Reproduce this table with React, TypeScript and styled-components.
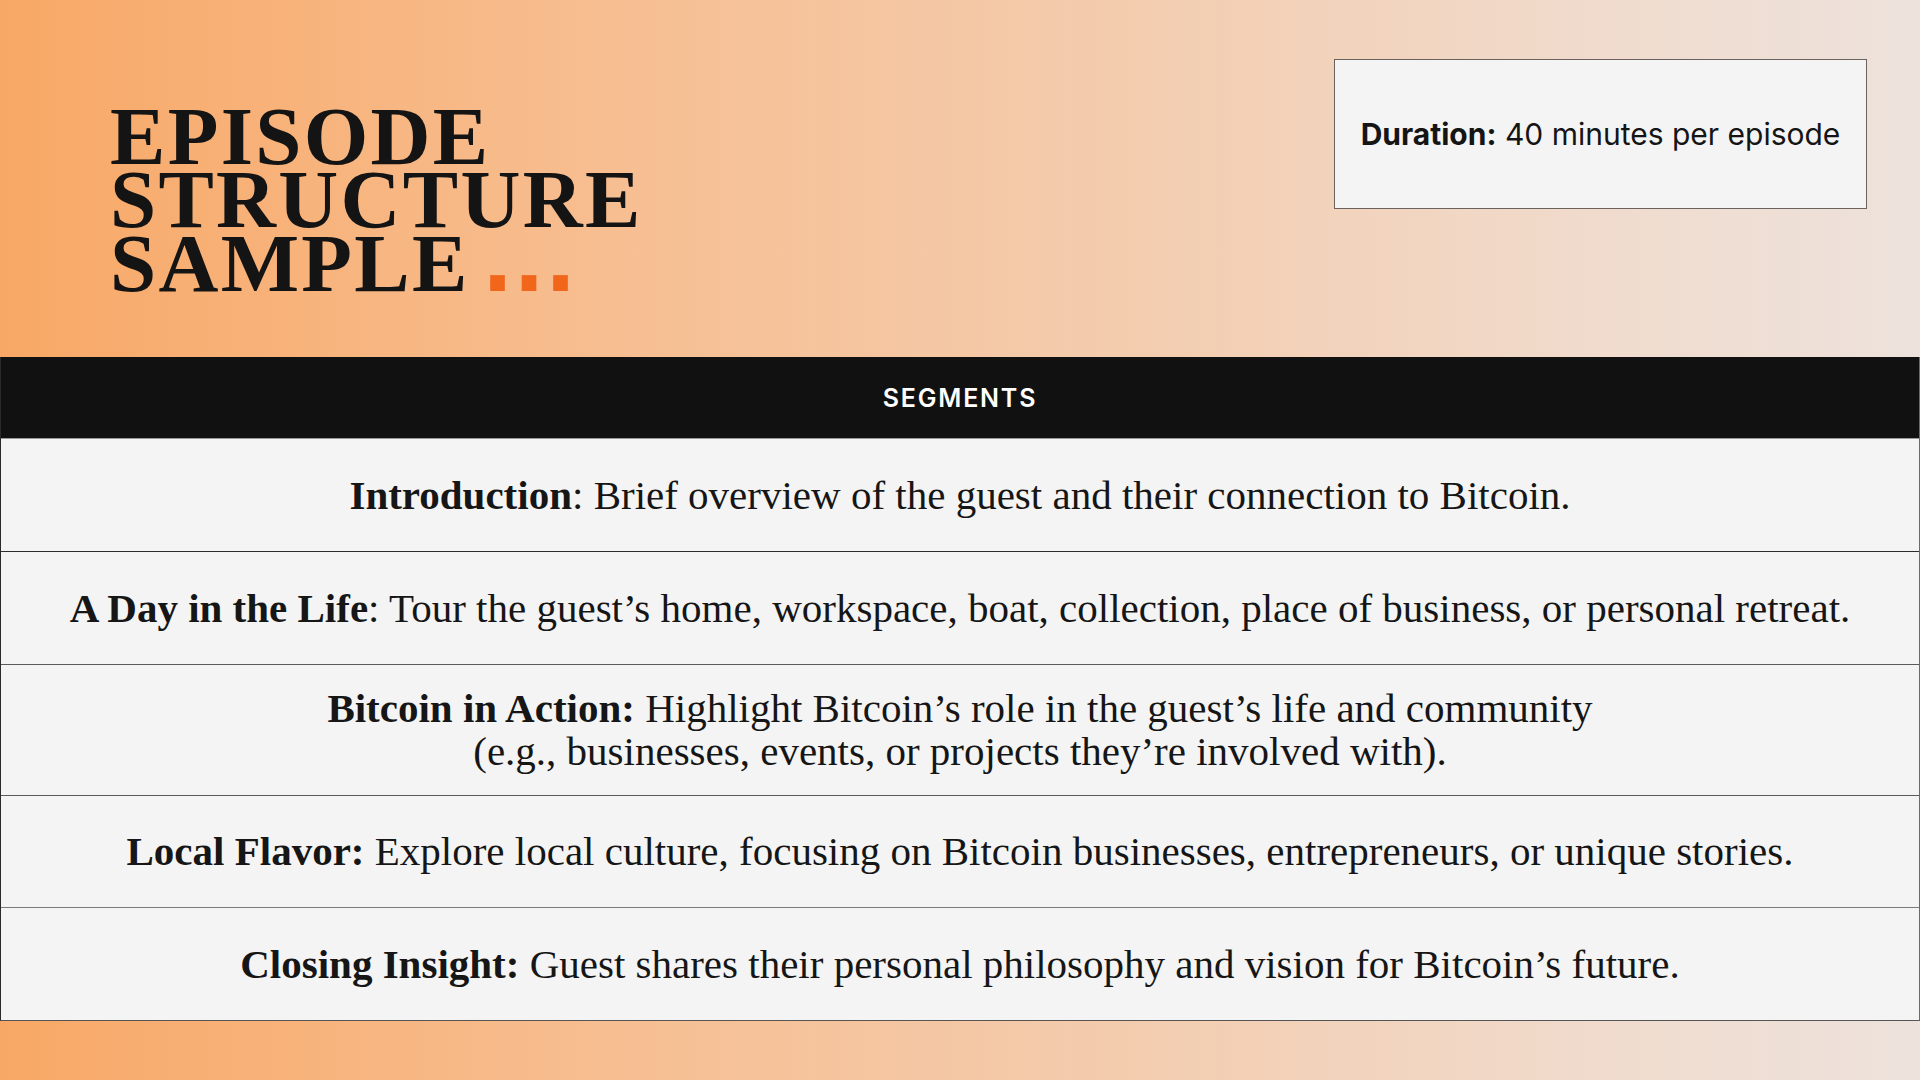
import * as React from 'react';
import styled, { createGlobalStyle } from 'styled-components';

const GlobalStyle = createGlobalStyle`
    html, body {
        margin: 0;
        padding: 0;
    }
    body {
        font-family: "Liberation Serif", serif;
        color: #141414;
    }
`;

const Page = styled.div`
    width: 1920px;
    height: 1080px;
    display: flex;
    flex-direction: column;
    background: linear-gradient(90deg, #f8a866 0%, #f7bd8f 30%, #f3cdb0 60%, #f0dccf 85%, #ede2dc 100%);
    overflow: hidden;
`;

const Header = styled.header`
    height: 357px;
    display: flex;
    justify-content: space-between;
    align-items: flex-start;
    padding: 0 53px 0 110px;
    box-sizing: border-box;
`;

const Title = styled.h1`
    margin: 105px 0 0;
    font-family: "Liberation Serif", serif;
    font-weight: 700;
    font-size: 83px;
    line-height: 63px;
    letter-spacing: 2.3px;
    text-transform: uppercase;
    color: #141414;
`;

// square dots, as in the reference
const Dots = styled.span`
    font-family: "DejaVu Sans", sans-serif;
    font-weight: 700;
    color: #f2661c;
    letter-spacing: 0;
    margin-left: 12px;
`;

const DurationBox = styled.div`
    margin-top: 59px;
    width: 533px;
    height: 150px;
    box-sizing: border-box;
    border: 1px solid #6b625d;
    background: #f4f4f4;
    display: flex;
    align-items: center;
    justify-content: center;
    font-family: "Inter", "Noto Sans", sans-serif;
    font-size: 30px;
    color: #151515;

    b {
        font-weight: 700;
    }
`;

const Table = styled.section`
    border-left: 1px solid #2a2a2a;
    border-right: 1px solid #6a6a6a;
    border-bottom: 1px solid #555;
    background: #f4f4f4;
`;

const SegHead = styled.div`
    height: 81px;
    background: #111111;
    color: #ffffff;
    display: flex;
    align-items: center;
    justify-content: center;
    font-family: "Inter", "Noto Sans", sans-serif;
    font-weight: 600;
    font-size: 25px;
    letter-spacing: 1.8px;
    border-bottom: 1px solid #9a9a9a;
`;

const Row = styled.div<{ $h: number, $line?: string }>`
    height: ${p => p.$h}px;
    box-sizing: border-box;
    border-top: 1px solid ${p => p.$line || '#2c2c2c'};
    display: flex;
    align-items: center;
    justify-content: center;
    text-align: center;
    font-size: 41px;
    line-height: 43px;
    color: #161616;

    &:first-of-type {
        border-top: none;
    }

    b {
        font-weight: 700;
    }
`;

const segments = [
    { h: 112, title: 'Introduction', text: ': Brief overview of the guest and their connection to Bitcoin.' },
    { h: 113, title: 'A Day in the Life', text: ': Tour the guest\u2019s home, workspace, boat, collection, place of business, or personal retreat.' },
    { h: 131, title: 'Bitcoin in Action:', text: ' Highlight Bitcoin\u2019s role in the guest\u2019s life and community', second: '(e.g., businesses, events, or projects they\u2019re involved with).', line: '#5a5a5a' },
    { h: 112, title: 'Local Flavor:', text: ' Explore local culture, focusing on Bitcoin businesses, entrepreneurs, or unique stories.', line: '#5a5a5a' },
    { h: 113, title: 'Closing Insight:', text: ' Guest shares their personal philosophy and vision for Bitcoin\u2019s future.', line: '#7a7a7a' },
];

export default function App() {
    return (
        <Page>
            <GlobalStyle />
            <Header>
                <Title>
                    Episode<br />
                    Structure<br />
                    Sample<Dots>...</Dots>
                </Title>
                <DurationBox>
                    <span><b>Duration:</b> 40 minutes per episode</span>
                </DurationBox>
            </Header>

            <Table>
                <SegHead>SEGMENTS</SegHead>
                <div>
                    {segments.map(s => (
                        <Row key={s.title} $h={s.h} $line={s.line}>
                            <div>
                                <b>{s.title}</b>{s.text}
                                {s.second && (<><br />{s.second}</>)}
                            </div>
                        </Row>
                    ))}
                </div>
            </Table>
        </Page>
    );
}
